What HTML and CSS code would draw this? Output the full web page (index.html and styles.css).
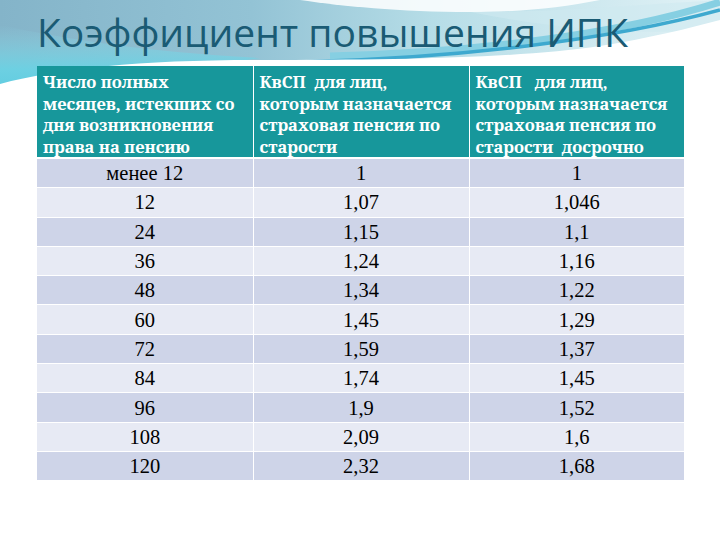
FILE: index.html
```html
<!DOCTYPE html>
<html lang="ru">
<head>
<meta charset="utf-8">
<title>Коэффициент повышения ИПК</title>
<link rel="stylesheet" href="styles.css">
</head>
<body>
<div class="slide">
  <svg class="backdrop" width="720" height="130" viewBox="0 0 720 130" aria-hidden="true">
    <defs>
      <linearGradient id="sky" x1="0" y1="0" x2="1" y2="0">
        <stop offset="0" stop-color="#84b4c9"/>
        <stop offset="0.35" stop-color="#93c3d5"/>
        <stop offset="0.6" stop-color="#b6dde7"/>
        <stop offset="1" stop-color="#e2f2f6"/>
      </linearGradient>
      <linearGradient id="cyan" x1="0" y1="0" x2="0" y2="1">
        <stop offset="0" stop-color="#8fd6e4" stop-opacity="0"/>
        <stop offset="0.6" stop-color="#6dd0e2"/>
        <stop offset="1" stop-color="#5ccbe0"/>
      </linearGradient>
    </defs>
    <rect width="720" height="130" fill="url(#sky)"/>
    <path d="M0,25 C70,40 150,52 260,58 L0,98 Z" fill="url(#cyan)"/>
    <path d="M300,0 C340,6 400,12 470,12 C520,12 560,8 600,0 Z" fill="#ffffff" opacity="0.85"/>
    <path d="M470,12 C560,12 650,4 720,0 L720,30 C640,35 560,30 470,12 Z" fill="#cfeaf0" opacity="0.6"/>
    <path d="M330,56 C480,52 620,34 720,2" stroke="#86cfe2" stroke-width="7" fill="none"/>
    <path d="M300,62 C460,58 610,40 720,10" stroke="#3ea9cf" stroke-width="3.5" fill="none"/>
    <path d="M0,84 C60,68 140,60 260,60 C400,60 520,58 600,46 C650,38 690,28 720,20 L720,130 L0,130 Z" fill="#ffffff"/>
  </svg>
  <h1 class="title">Коэффициент повышения ИПК</h1>
  <table class="grid">
    <colgroup>
      <col class="c1"><col class="c2"><col class="c3">
    </colgroup>
    <thead>
      <tr>
        <th>Число полных<br>месяцев, истекших со<br>дня возникновения<br>права на пенсию</th>
        <th>КвСП&nbsp; для лиц,<br>которым назначается<br>страховая пенсия по<br>старости</th>
        <th>КвСП&nbsp;&nbsp; для лиц,<br>которым назначается<br>страховая пенсия по<br>старости&nbsp; досрочно</th>
      </tr>
    </thead>
    <tbody>
      <tr><td>менее 12</td><td>1</td><td>1</td></tr>
      <tr><td>12</td><td>1,07</td><td>1,046</td></tr>
      <tr><td>24</td><td>1,15</td><td>1,1</td></tr>
      <tr><td>36</td><td>1,24</td><td>1,16</td></tr>
      <tr><td>48</td><td>1,34</td><td>1,22</td></tr>
      <tr><td>60</td><td>1,45</td><td>1,29</td></tr>
      <tr><td>72</td><td>1,59</td><td>1,37</td></tr>
      <tr><td>84</td><td>1,74</td><td>1,45</td></tr>
      <tr><td>96</td><td>1,9</td><td>1,52</td></tr>
      <tr><td>108</td><td>2,09</td><td>1,6</td></tr>
      <tr><td>120</td><td>2,32</td><td>1,68</td></tr>
    </tbody>
  </table>
</div>
</body>
</html>
```
FILE: styles.css
```css
html, body {
  margin: 0;
  padding: 0;
  background: #ffffff;
}
.slide {
  width: 720px;
  height: 540px;
  overflow: hidden;
  position: relative;
  background: #ffffff;
}
.backdrop {
  position: absolute;
  top: 0;
  left: 0;
  z-index: 0;
}
.title {
  position: relative;
  z-index: 1;
  margin: 0;
  padding: 8px 0 0 37px;
  height: 60px;
  box-sizing: border-box;
  font-family: "Open Sans", "Noto Sans", sans-serif;
  font-weight: 400;
  font-size: 39px;
  line-height: 48px;
  letter-spacing: 0;
  color: #1a5b74;
  white-space: nowrap;
}
.grid {
  position: relative;
  z-index: 1;
  margin: 6px 0 0 37px;
  width: 647px;
  border-collapse: collapse;
  table-layout: fixed;
}
.c1 { width: 216px; }
.c2 { width: 216px; }
.c3 { width: 215px; }
.grid th {
  background: #17979b;
  color: #ffffff;
  font-family: "Noto Serif", "DejaVu Serif", serif;
  font-weight: 700;
  font-size: 16.6px;
  line-height: 21.5px;
  text-align: left;
  vertical-align: top;
  white-space: nowrap;
  padding: 5px 6px 0 6px;
  height: 86px;
  border-left: 1px solid #ffffff;
  border-bottom: 2px solid #ffffff;
}
.grid th:first-child,
.grid td:first-child {
  border-left: none;
}
.grid td {
  font-family: "Liberation Serif", "Times New Roman", serif;
  font-size: 20.5px;
  color: #000000;
  text-align: center;
  vertical-align: middle;
  height: 28.3px;
  padding: 0;
  line-height: 24px;
  border-left: 1px solid #ffffff;
  border-bottom: 1px solid #ffffff;
}
.grid tbody tr:nth-child(odd) td {
  background: #ced4e8;
}
.grid tbody tr:nth-child(even) td {
  background: #e7eaf4;
}
.grid tbody tr:last-child td {
  border-bottom: none;
}
```
